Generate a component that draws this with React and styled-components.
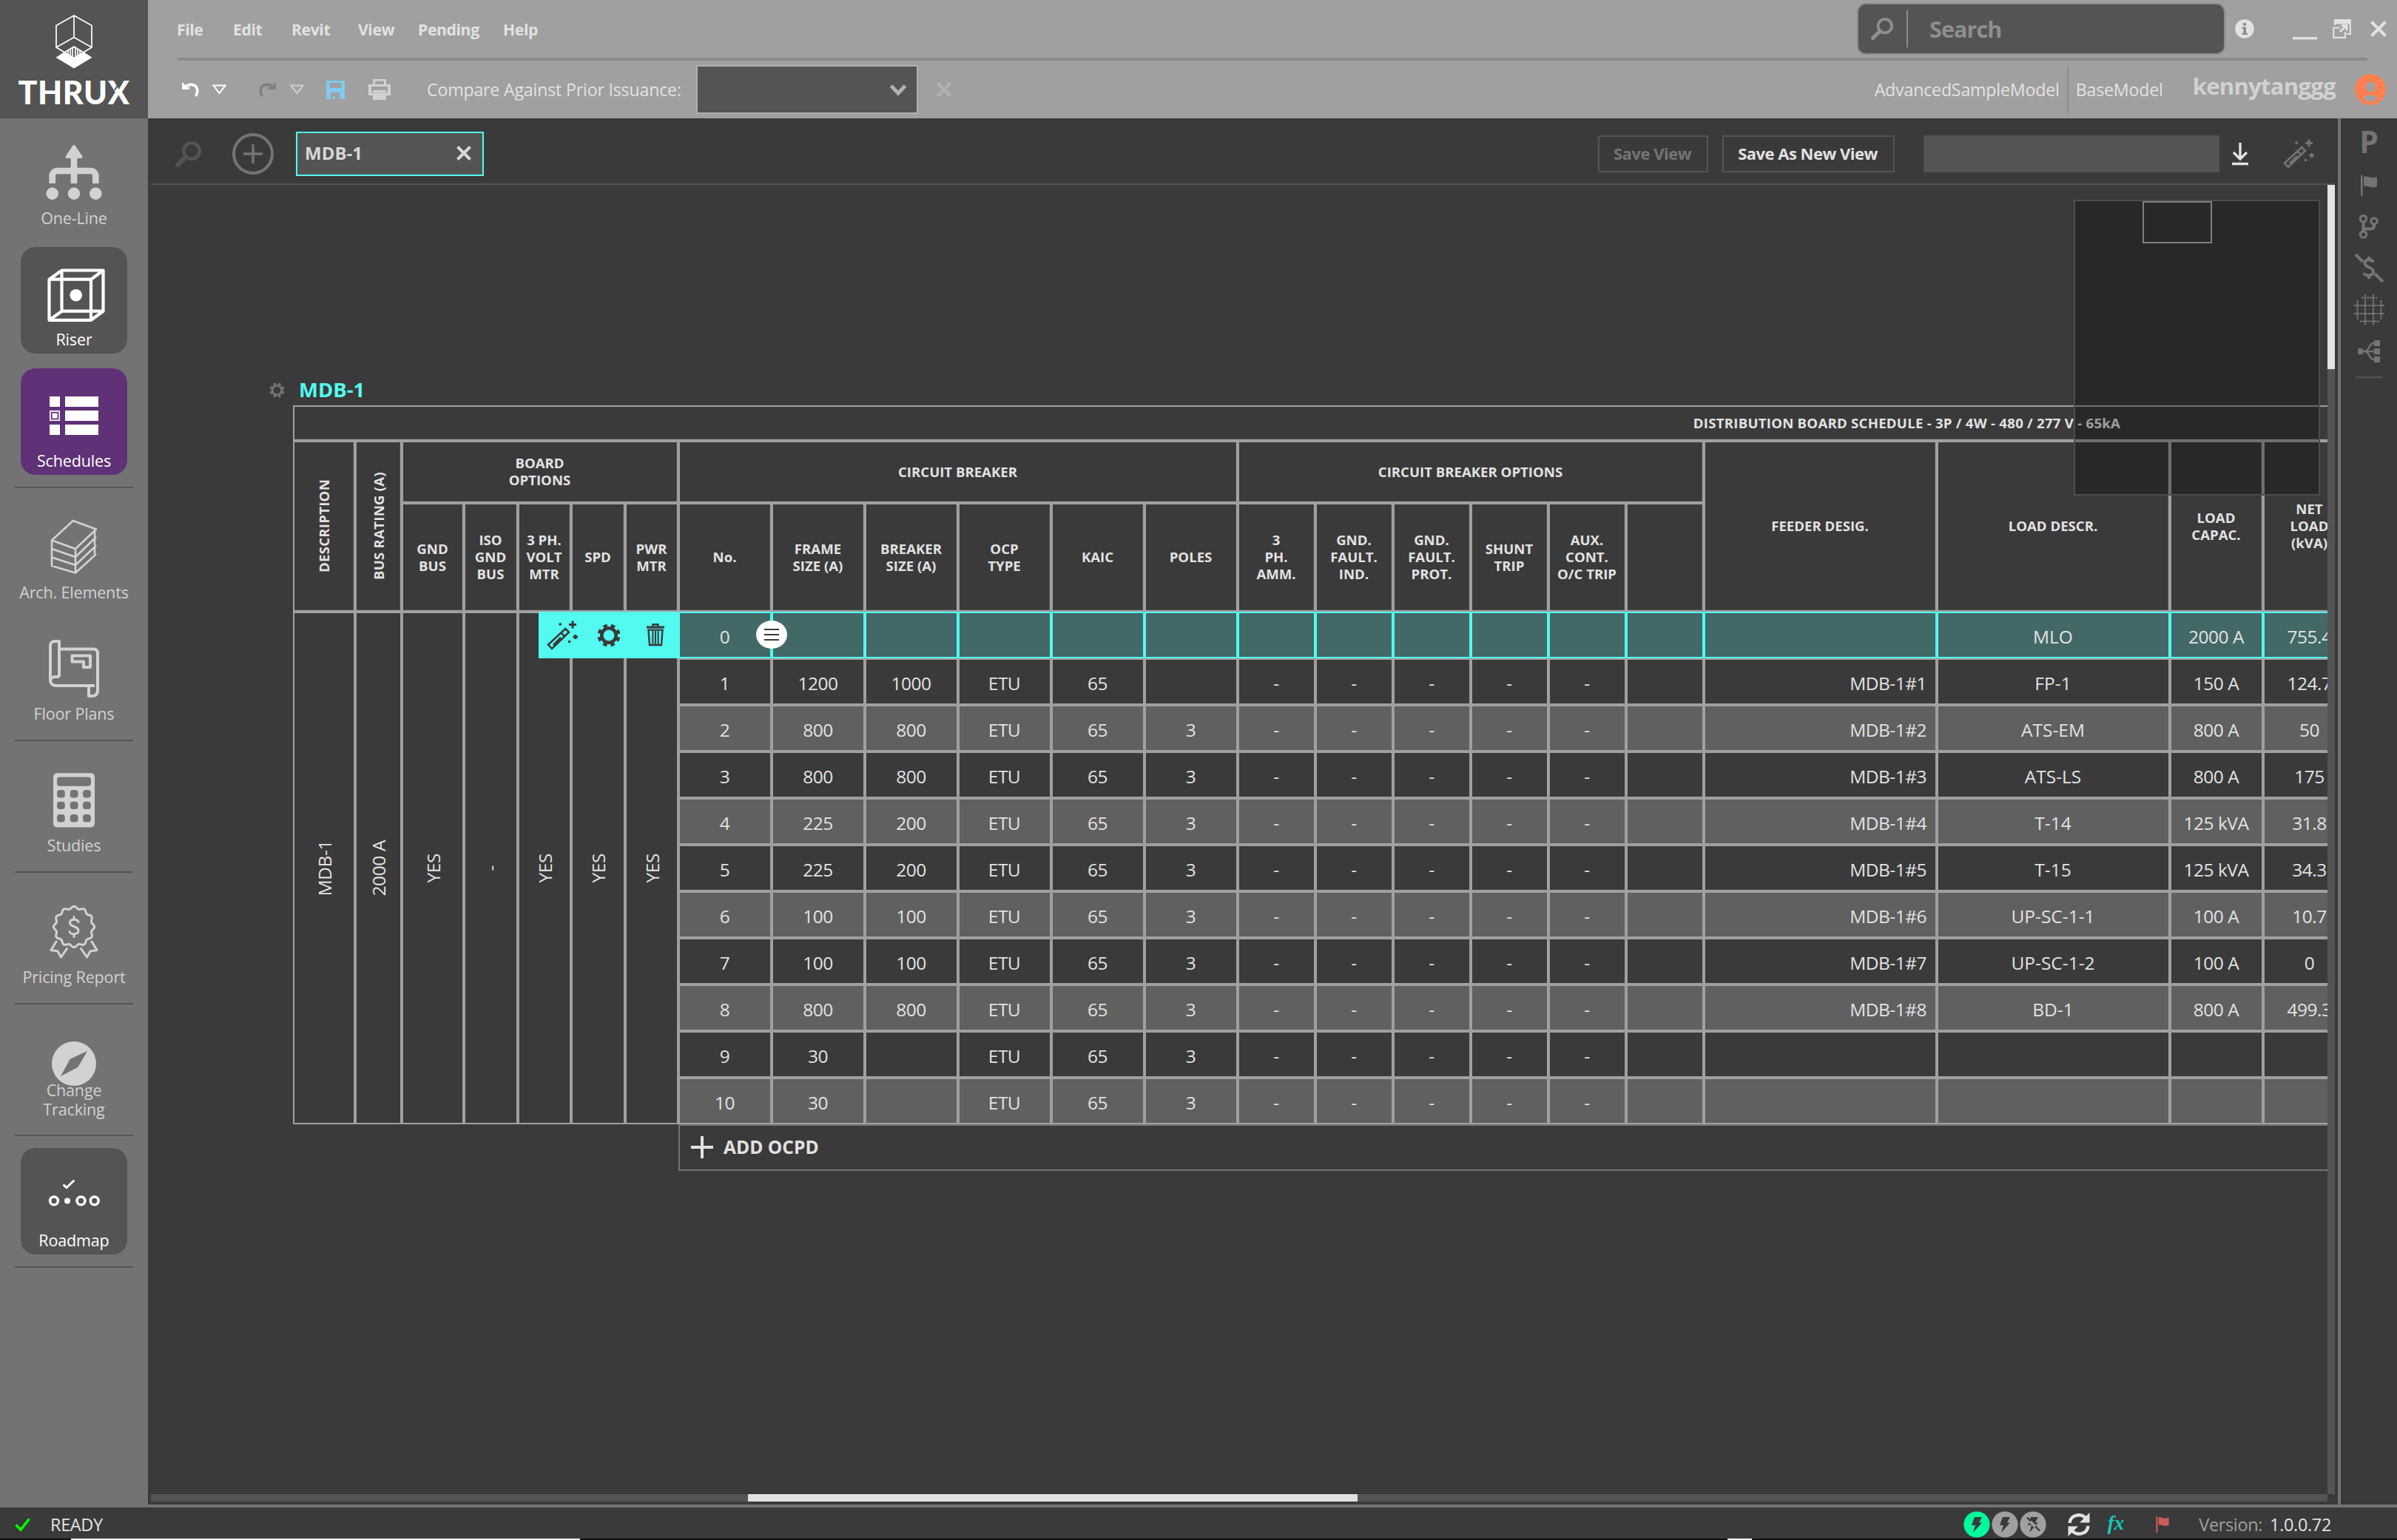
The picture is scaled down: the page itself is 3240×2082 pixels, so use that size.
import React from "react";
import styled, { createGlobalStyle } from "styled-components";

const GlobalStyle = createGlobalStyle`
  * {
    box-sizing: border-box;
  }
  body {
    margin: 0;
    background: #3a3a3a;
    font-family: "Open Sans", "Noto Sans", sans-serif;
    color: #e2e2e2;
  }
  svg {
    display: block;
    flex: none;
    overflow: visible;
  }
`;

const Page = styled.div`
  display: flex;
  flex-direction: column;
  width: 3240px;
  height: 2082px;
  overflow: hidden;
  background: #3a3a3a;
`;

/* ---------- top ---------- */

const Top = styled.header`
  display: flex;
  flex: none;
  height: 160px;
`;

const LogoBox = styled.div`
  display: flex;
  flex-direction: column;
  align-items: center;
  width: 200px;
  padding-top: 19px;
  background: #545454;
`;

const LogoText = styled.div`
  position: relative;
  margin-top: 9px;
  font-family: "Lato", "Open Sans", sans-serif;
  font-weight: 900;
  font-size: 43px;
  line-height: 44px;
  letter-spacing: 0.6px;
  color: #fff;
`;

const LogoCut = styled.i`
  position: absolute;
  right: 16px;
  top: 5px;
  width: 2px;
  height: 15px;
  background: #545454;
  transform: rotate(33deg);
`;

const Bars = styled.div`
  flex: 1;
  background: #a0a0a0;
`;

const Bar = styled.div`
  display: flex;
  align-items: center;
  height: 78px;
  padding-left: ${(p) => p.$pl}px;
`;

const Rule = styled.div`
  width: 2960px;
  height: 4px;
  margin-left: 40px;
  background: #8b8b8b;
`;

const Push = styled.div`
  flex: 1;
`;

const Slot = styled.div`
  display: flex;
  flex: none;
  width: ${(p) => p.$w}px;
  padding-left: ${(p) => p.$pl || 0}px;
  color: #747474;
`;

const MenuItem = styled.a`
  flex: none;
  width: ${(p) => p.$w}px;
  font-size: 21.2px;
  font-weight: 700;
  letter-spacing: -0.4px;
  color: #e2e2e2;
`;

const BarText = styled.span`
  flex: none;
  font-size: 23.2px;
  letter-spacing: -0.2px;
  color: #e2e2e2;
  white-space: nowrap;
`;

const Combo = styled.div`
  display: flex;
  align-items: center;
  justify-content: flex-end;
  width: 300px;
  height: 66px;
  margin-left: 20px;
  padding-right: 14px;
  border: 2px solid #aeaeae;
  background: #545454;
`;

const SearchBox = styled.div`
  display: flex;
  align-items: center;
  width: 498px;
  height: 70px;
  padding-left: 17px;
  border: 2px solid #8b8b8b;
  border-radius: 12px;
  background: #545454;
  color: #8e8e8e;
  font-size: 30.5px;
  font-weight: 700;
  letter-spacing: -0.9px;
`;

const VLine = styled.div`
  flex: none;
  width: 2px;
  height: ${(p) => p.$h}px;
  margin: 0 ${(p) => p.$mr}px 0 ${(p) => p.$ml}px;
  background: #8b8b8b;
`;

const UserName = styled.span`
  margin: 0 26px 10px 40px;
  font-size: 31px;
  font-weight: 700;
  letter-spacing: -0.7px;
  color: #d2d2d2;
`;

/* ---------- sidebar ---------- */

const Middle = styled.div`
  display: flex;
  flex: none;
  height: 1878px;
`;

const Side = styled.nav`
  display: flex;
  flex-direction: column;
  align-items: center;
  flex: none;
  width: 200px;
  padding-top: 10px;
  background: #737373;
`;

const SideGroup = styled.div`
  display: flex;
  flex-direction: column;
  align-items: center;
  gap: 20px;
  width: 160px;
  margin-bottom: 16px;
  padding-bottom: 16px;
  border-bottom: 2px solid #545454;
`;

const tones = { none: "transparent", dark: "#545454", purple: "#5f3177" };

const SideItem = styled.div`
  width: 144px;
  height: 144px;
  border-radius: 20px;
  background: ${(p) => tones[p.$tone]};
  color: ${(p) => (p.$tone === "none" ? "#d2d2d2" : "#fff")};
`;

const SideLabel = styled.div`
  margin: ${(p) => (p.$lines === 2 ? -17 : 8)}px -10px 0;
  font-size: 21.5px;
  line-height: 26px;
  letter-spacing: -0.15px;
  text-align: center;
  white-space: pre-line;
`;

/* ---------- workspace ---------- */

const Main = styled.main`
  display: flex;
  flex: 1;
  border-bottom: 4px solid #737373;
`;

const Workspace = styled.div`
  display: flex;
  flex-direction: column;
  width: 2960px;
  padding-left: 4px;
`;

const Tools = styled.div`
  display: flex;
  align-items: center;
  width: 2951px;
  height: 90px;
  padding: 8px 29px 0 33px;
  border-bottom: 2px solid #545454;
`;

const Tab = styled.div`
  display: flex;
  align-items: center;
  justify-content: space-between;
  width: 254px;
  height: 60px;
  margin-left: 30px;
  padding: 0 15px 3px 10px;
  border: 2px solid #53faef;
  background: #545454;
  font-size: 24px;
  font-weight: 700;
  color: #d8d8d8;
`;

const ToolButton = styled.button`
  width: ${(p) => p.$w}px;
  height: 50px;
  margin-right: ${(p) => p.$mr}px;
  padding: 0 2px 2px 0;
  border: 2px solid #545454;
  background: none;
  font: 700 22px "Open Sans", sans-serif;
  letter-spacing: -0.5px;
  color: ${(p) => (p.$off ? "#747474" : "#e2e2e2")};
`;

const ViewInput = styled.div`
  width: 400px;
  height: 50px;
  background: #545454;
`;

const CanvasRow = styled.div`
  display: flex;
  height: 1770px;
`;

const Canvas = styled.section`
  position: relative;
  width: 2942px;
  overflow: hidden;
`;

const VTrack = styled.div`
  width: 10px;
  background: #545454;
`;

const VThumb = styled.div`
  height: 249px;
  background: #e2e2e2;
`;

const HTrack = styled.div`
  width: 2942px;
  height: 10px;
  padding-left: 807px;
  background: #545454;
`;

const HThumb = styled.div`
  width: 824px;
  height: 10px;
  background: #e2e2e2;
`;

const Minimap = styled.div`
  position: absolute;
  left: 2599px;
  top: 20px;
  width: 333px;
  height: 400px;
  padding-left: 91px;
  border: 2px solid #4d4d4d;
  background: rgba(0, 0, 0, 0.3);
`;

const MiniView = styled.div`
  width: 94px;
  height: 57px;
  border: 2px solid #808080;
`;

const BoardTitle = styled.h2`
  display: flex;
  align-items: center;
  gap: 19px;
  height: 44px;
  margin: 254px 0 0 160px;
  font-size: 27.5px;
  font-weight: 700;
  color: #53faef;
`;

const TitleGear = styled.span`
  padding-top: 2px;
  color: #747474;
`;

const Board = styled.div`
  position: relative;
  display: grid;
  grid-template-columns: 84px 63px 84px 73px 72px 73px 72px repeat(6, 126px) repeat(6, 105px) 315px 315px 126px 126px 1575px;
  grid-template-rows: 48px 84px 147px repeat(12, 63px);
  width: 4364px;
  margin-left: 192px;
`;

const Cell = styled.div`
  display: flex;
  align-items: center;
  justify-content: center;
  border: 2px solid #a0a0a0;
  text-align: center;
  white-space: pre-line;
`;

const HeadCell = styled(Cell)`
  grid-area: ${(p) => p.$area};
  padding: 0 1px 2px 0;
  font-size: 18.6px;
  font-weight: 700;
  line-height: 23px;
  letter-spacing: ${(p) => (p.$wide ? 0.25 : 0)}px;
  box-shadow: inset -1px -1px 0 #4c4c4c;
`;

const Upright = styled.span`
  writing-mode: vertical-rl;
  transform: rotate(180deg);
`;

const SpanCell = styled(Cell)`
  grid-row: 4 / 15;
  font-size: 24.5px;
  letter-spacing: -0.4px;
`;

const DataCell = styled(Cell)`
  padding: 3px ${(p) => (p.$right ? 12 : 1)}px 0 0;
  justify-content: ${(p) => (p.$right ? "flex-end" : "center")};
  border-color: ${(p) => (p.$row === 0 ? "#53faef" : "#a0a0a0")};
  background: ${(p) => (p.$row === 0 ? "#426968" : p.$row % 2 ? "#3a3a3a" : "#606060")};
  font-size: 24.5px;
  letter-spacing: ${(p) => (p.$name ? 0 : -0.5)}px;
`;

const AddRow = styled.div`
  grid-area: 15 / 8 / 16 / -1;
  display: flex;
  align-items: center;
  gap: 14px;
  padding: 0 0 2px 15px;
  border: 2px solid #747474;
  font-size: 24.6px;
  font-weight: 700;
`;

const RowActions = styled.div`
  position: absolute;
  left: 332px;
  top: 279px;
  display: grid;
  grid-template-columns: repeat(3, 63px);
  place-items: center;
  width: 191px;
  height: 63px;
  background: #53faef;
  color: #3a3a3a;
`;

const RowHandle = styled.div`
  position: absolute;
  left: 626px;
  top: 291px;
  display: flex;
  flex-direction: column;
  align-items: center;
  justify-content: center;
  gap: 5px;
  width: 42px;
  height: 38px;
  border-radius: 50%;
  background: #fff;

  i {
    width: 20px;
    height: 2px;
    background: #3a3a3a;
  }
`;

const Rail = styled.aside`
  display: flex;
  flex-direction: column;
  align-items: center;
  width: 80px;
  border-left: 4px solid #737373;
  color: #747474;
`;

const RailLetter = styled.div`
  height: 77px;
  padding-top: 8px;
  font-size: 41px;
  line-height: 46px;
  font-weight: 700;
`;

const RailItem = styled.div`
  display: flex;
  align-items: flex-start;
  height: ${(p) => p.$h}px;
`;

const RailRule = styled.div`
  width: 36px;
  height: 2px;
  background: #545454;
`;

/* ---------- status ---------- */

const Status = styled.footer`
  display: flex;
  align-items: center;
  flex: none;
  height: 42px;
  padding: 4px 89px 0 20px;
  font-size: 23.5px;
  letter-spacing: -0.35px;
`;

const Dim = styled.span`
  margin-right: 10px;
  color: #a0a0a0;
`;

const Pills = styled.div`
  display: flex;
  gap: 2px;
  margin-right: 29px;
`;

const Fx = styled.span`
  margin: 0 43px 4px 24px;
  font-family: "Liberation Serif", serif;
  font-style: italic;
  font-weight: 700;
  font-size: 27px;
  letter-spacing: 0;
  color: #12c9ba;
`;

const Desktop = styled.div`
  display: flex;
  flex: none;
  height: 2px;
  background: #0c0c0c;
`;

const Sliver = styled.div`
  width: ${(p) => p.$w}px;
  margin-left: ${(p) => p.$ml}px;
  background: #f2f2f2;
`;

/* ---------- icons ---------- */

const Svg = ({ w, h, children, color = "currentColor", sw = 0 }) => (
  <svg width={w} height={h} viewBox={`0 0 ${w} ${h}`} fill={sw ? "none" : color} stroke={sw ? color : "none"} strokeWidth={sw}>
    {children}
  </svg>
);

const LogoMark = () => (
  <Svg w={50} h={75} color="#fff" sw={1.7}>
    <path d="M25 2 L49 15.5 V45 L25 59.5 L1 45 V15.5 Z M25 2 V31.5 M25 31.5 L1 45 M25 31.5 L49 45" />
    <path d="M11.5 51.5 L25 60 L38.5 51.5 L49.5 58.7 L25 73.5 L0.5 58.7 Z" fill="#fff" stroke="none" />
    <path d="M12 52 L25 44 L38 52 M17 49.5 V55 M20 48 V56.5 M23 46 V58 M27 46 V58 M30 48 V56.5 M33 49.5 V55" />
  </Svg>
);

const Undo = ({ color, flip }) => (
  <svg width="24" height="24" viewBox="0 0 24 24" transform={flip ? "scale(-1 1)" : undefined}>
    <path d="M4 9.5 C10 3 22 4 21.8 14.5 Q21.6 18 19.6 21" fill="none" stroke={color} strokeWidth="3.6" />
    <path d="M1 2 L4.5 5 L6 9 L12 8.5 L10.5 12 H1 Z" fill={color} />
  </svg>
);

const Caret = ({ color }) => (
  <Svg w={21} h={14} color={color} sw={2}>
    <path d="M2.5 1.5 H18.5 L10.5 12 Z" />
  </Svg>
);

const Floppy = () => (
  <Svg w={25} h={25} color="#7fcbee">
    <path fillRule="evenodd" d="M0 0 H25 V25 H0 Z M4.5 3 V10 H20.5 V3 Z M6 16 V25 H9 V21 H12 V25 H18 V16 Z" />
  </Svg>
);

const Printer = () => (
  <Svg w={30} h={30} color="#d2d2d2">
    <path fillRule="evenodd" d="M6 1 H24 V8 H6 Z M9 3.5 V8 H21 V3.5 Z" />
    <path fillRule="evenodd" d="M0 8 H30 V23 H24 V29 H6 V23 H0 Z M4 11 V19.5 H26 V11 Z" />
    <rect x="6" y="16" width="18" height="3" />
  </Svg>
);

const Cross = ({ s, color, sw = 4 }) => (
  <Svg w={s} h={s} color={color} sw={sw}>
    <path d={`M1.5 1.5 L${s - 1.5} ${s - 1.5} M${s - 1.5} 1.5 L1.5 ${s - 1.5}`} />
  </Svg>
);

const Chevron = () => (
  <Svg w={22} h={17} color="#b0b0b0" sw={5}>
    <path d="M1.5 3 L11 13 L20.5 3" />
  </Svg>
);

const Magnifier = ({ s = 35, color, sw = 4.6 }) => (
  <svg width={s} height={s} viewBox="0 0 35 35" fill="none" stroke={color} strokeWidth={sw} strokeLinecap="round">
    <circle cx="22" cy="13" r="10.8" />
    <path d="M14 21.5 L3 32" strokeWidth="6" />
  </svg>
);

const Info = () => (
  <Svg w={26} h={26} color="#e2e2e2">
    <circle cx="13" cy="13" r="12.8" />
    <path d="M11 5 H15 V8.6 H11 Z M9.5 10.5 H15 V18.5 H17 V21 H9.5 V18.5 H11.4 V13 H9.5 Z" fill="#8e8e8e" />
  </Svg>
);

const Minimize = () => (
  <Svg w={33} h={26} color="#e2e2e2">
    <rect y="24" width="33" height="3.4" />
  </Svg>
);

const Restore = () => (
  <Svg w={25} h={26} color="#e2e2e2" sw={2.2}>
    <path d="M3 8 V1.2 H23.8 V20 H19" />
    <path d="M2 4 H24" strokeWidth="5" />
    <path d="M10 11.5 H1.2 V24.8 H17 V17" />
    <path d="M10 17 L18 9 M12 8.5 H19 V15.5" strokeWidth="3" />
  </Svg>
);

const Avatar = () => (
  <Svg w={42} h={42} color="#ff7f4f">
    <circle cx="21" cy="21" r="21" />
    <circle cx="21" cy="17.5" r="6.8" fill="#a0a0a0" />
    <path d="M11.5 33 C13 27 29 27 30.5 33 C26 38.5 16 38.5 11.5 33 Z" fill="#a0a0a0" />
  </Svg>
);

const PlusRing = () => (
  <Svg w={56} h={56} color="#747474" sw={4}>
    <circle cx="28" cy="28" r="26" />
    <path d="M15 28 H41 M28 15 V41" strokeWidth="3.4" />
  </Svg>
);

const Download = () => (
  <Svg w={22} h={31} color="#e2e2e2" sw={3.4}>
    <path d="M11 0 V21 M2 13 L11 22 L20 13 M0 28.5 H22" />
  </Svg>
);

const Wand = () => (
  <Svg w={42} h={40} color="currentColor" sw={2.6}>
    <path d="M25.3 11 L30 15.8 L7 38 L2 32.5 Z M19.5 16.5 L24.5 21.5 M9 33 L19 23" />
    <path d="M35 0.5 V10.5 M30 5.5 H40" strokeWidth="3" />
    <path d="M38.7 19 V25 M35.5 22 H42 M16.5 5 H20 M29 28.5 H32.2" strokeWidth="3" />
  </Svg>
);

const Gear = ({ s }) => (
  <svg width={s} height={s} viewBox="0 0 32 32" fill="none" stroke="currentColor">
    <circle cx="16" cy="16" r="9.7" strokeWidth="4.6" />
    <circle cx="16" cy="16" r="13.2" strokeWidth="4.6" strokeDasharray="5.4 4.97" strokeDashoffset="-2.4" />
  </svg>
);

const Trash = () => (
  <Svg w={24} h={31} sw={2.4}>
    <path d="M0 5 H24" strokeWidth="3" />
    <path d="M8.5 4 V1.2 H15.5 V4 M2.5 8.6 H21.5 L20 29 H4 Z" />
    <path d="M8.4 10 V28 M12 10 V28 M15.6 10 V28" strokeWidth="2" />
  </Svg>
);

const Plus = () => (
  <Svg w={30} h={30} color="#e2e2e2" sw={4}>
    <path d="M0 15 H30 M15 0 V30" />
  </Svg>
);

const Flag = ({ w, h, color = "currentColor" }) => (
  <svg width={w} height={h} viewBox="0 0 22 28" fill={color}>
    <path d="M0 0 H2.6 V28 H0 Z M4 2 C10 0 13 6 22 2 V15 C14 19 10 13 4 15 Z" />
  </svg>
);

const Branch = () => (
  <Svg w={28} h={34} sw={3.2}>
    <circle cx="6.5" cy="6.7" r="4.2" />
    <circle cx="21" cy="10" r="4.2" />
    <circle cx="6.5" cy="28" r="4.2" />
    <path d="M6.5 11 V24 M21 14 V16 Q21 20.5 16 20.5 H7" strokeWidth="4" />
  </Svg>
);

const NoDollar = () => (
  <Svg w={40} h={40} sw={4}>
    <path d="M26 12.5 C24 8 14.5 8 14.5 14 C14.5 20.5 26 18 26 25.5 C26 31.5 15 31.5 13 27" />
    <path d="M20 5 V10 M20 29 V35 M2 2 L12 12 M28 28 L39 39" />
  </Svg>
);

const Globe = () => (
  <Svg w={41} h={41} sw={2.2}>
    <path
      d="M0 15 H41 M0 26 H41 M15 0 V41 M26 0 V41 M10 4.5 H31 M8 36.5 H34 M4.5 8 V34 M36.5 8 V34"
      strokeDasharray="3 0.8"
    />
  </Svg>
);

const Tree = () => (
  <Svg w={30} h={30}>
    <path d="M0 11 H7 V19 H0 Z M22 0 H30 V8 H22 Z M22 11 H30 V19 H22 Z M22 22 H30 V30 H22 Z" />
    <path d="M7 15 H22 M22 4 C14 4 17 15 8 15 C17 15 14 26 22 26" fill="none" stroke="currentColor" strokeWidth="2.4" />
  </Svg>
);

const Check = () => (
  <Svg w={21} h={19} color="#00ff00" sw={3.6}>
    <path d="M1.5 9.5 L8 16 L19.5 1.5" />
  </Svg>
);

const Bolt = ({ color, cut }) => (
  <Svg w={36} h={36} color={color}>
    <circle cx="18" cy="18" r="17.6" />
    <path d="M15 8 H25 L21 15.5 H25 L13 29 L16 19 H11 Z" fill="#3a3a3a" />
    {cut && <path d="M9 9 L27 27" stroke={color} strokeWidth="4" />}
    {cut && <path d="M10 8.5 L15 13.5 M21 20.5 L27 26.5" stroke="#3a3a3a" strokeWidth="2.4" />}
  </Svg>
);

const Sync = () => (
  <Svg w={30} h={32} color="#e2e2e2" sw={4.4}>
    <path d="M2.5 14 C4 1.5 19 0.5 25 8.5 M27.5 18 C26 30.5 11 31.5 5 23.5" />
    <path d="M29.5 0 V13.5 H16 Z M0.5 32 V18.5 H14 Z" fill="#e2e2e2" stroke="none" />
  </Svg>
);

/* sidebar icons share one 144x104 box above the label */
const OneLineIcon = () => (
  <>
    <path d="M42.7 78 V68 a7 7 0 0 1 7 -7 H94.3 a7 7 0 0 1 7 7 V78 M72 40 V78" fill="none" stroke="currentColor" strokeWidth="8.7" />
    <path d="M72 28 L62.5 42 H81.5 Z" stroke="currentColor" strokeWidth="4" strokeLinejoin="round" />
    <circle cx="42.7" cy="91.7" r="8.2" />
    <circle cx="72" cy="91.7" r="8.2" />
    <circle cx="101.3" cy="91.7" r="8.2" />
  </>
);

const RiserIcon = () => (
  <>
    <path
      d="M38.5 43.7 H95 V98.8 H38.5 Z M55.5 31.5 H111.5 V86.7 H55.5 Z M38.5 43.7 L55.5 31.5 M95 43.7 L111.5 31.5 M38.5 98.8 L55.5 86.7 M95 98.8 L111.5 86.7"
      fill="none"
      stroke="currentColor"
      strokeWidth="4.2"
      strokeLinejoin="round"
    />
    <circle cx="74.7" cy="65.2" r="8.3" />
  </>
);

const SchedulesIcon = () => (
  <>
    {[38, 57, 76].map((y) => (
      <React.Fragment key={y}>
        <rect x="39" y={y} width="14" height="14" />
        <rect x="60" y={y} width="45" height="14" />
      </React.Fragment>
    ))}
    <rect x="41.7" y="59.7" width="8.8" height="8.8" fill="none" stroke="#5f3177" strokeWidth="1.8" />
  </>
);

const ArchIcon = () => (
  <path
    d="M42 54.5 L70.7 28 L102 39.5 L74 66 Z M42 54.5 V89 L74 98.5 V66 M42 66 L74 77 L102 50 M42 77.5 L74 88 L102 61.5 M74 98.5 L102 73 M100 41 V50 M100 53 V61 M100 64 V73"
    fill="none"
    stroke="currentColor"
    strokeWidth="2.6"
    strokeLinejoin="round"
  />
);

const FloorIcon = () => (
  <path
    d="M52 75 V27 H46 a6 6 0 0 0 -6 6 V80 a7 7 0 0 0 7 7 H100 M40 80 a6 6 0 0 1 6 -5 H52 M53 37.5 H99 a5 5 0 0 1 5 5 V94 a7 7 0 0 1 -8 7 H92 V87 M69.5 46.5 H94 V62 H85 V54.5 H69.5 Z"
    fill="none"
    stroke="currentColor"
    strokeWidth="4"
    strokeLinejoin="round"
  />
);

const StudiesIcon = () => (
  <>
    <rect x="44" y="27.3" width="56" height="73.2" rx="5" />
    <g fill="#737373">
      <rect x="49" y="32.5" width="46" height="12.3" rx="4" />
      {[50, 65.7, 83].map((y) => [49, 66.7, 84].map((x) => <rect key={x + y} x={x} y={y} width="10.8" height="10.4" rx="4" />))}
    </g>
  </>
);

const badge = Array.from({ length: 145 }, (_, i) => {
  const a = (i / 144) * Math.PI * 2;
  const r = 26 + 1.6 * Math.cos(a * 12);
  return `${i ? "L" : "M"}${(72 + r * Math.sin(a)).toFixed(1)} ${(57 - r * Math.cos(a)).toFixed(1)}`;
}).join(" ");

const PricingIcon = () => (
  <g fill="none" stroke="currentColor" strokeWidth="3" strokeLinecap="round" strokeLinejoin="round">
    <path d={badge} />
    <path d="M48 77 L41 88.5 L50 90 L54.5 98 L62.5 86.5 M96 77 L103 88.5 L94 90 L89.5 98 L81.5 86.5" />
    <path d="M78 50.5 C76.5 46 66.5 46 66.5 51.5 C66.5 58 78 55.5 78 62 C78 68 67 68 66 63.5 M72 43.5 V47 M72 67 V70.5" />
  </g>
);

const ChangeIcon = () => (
  <>
    <circle cx="72" cy="64" r="30" />
    <path d="M90 47 L66.7 57.8 L54 81 L77.3 68.7 Z" fill="#737373" />
  </>
);

const RoadmapIcon = () => (
  <g fill="none" stroke="currentColor">
    <path d="M58.5 50.5 L62 53.5 L71.5 44.5" strokeWidth="3" strokeLinecap="round" />
    <circle cx="45" cy="71.4" r="5.4" strokeWidth="3.6" />
    <circle cx="63" cy="71.4" r="4" fill="currentColor" stroke="none" />
    <circle cx="81.5" cy="71.4" r="5.4" strokeWidth="3.6" />
    <circle cx="99.7" cy="71.4" r="5.4" strokeWidth="3.6" />
  </g>
);

const sideGroups = [
  [
    { label: "One-Line", icon: OneLineIcon },
    { label: "Riser", icon: RiserIcon, tone: "dark" },
    { label: "Schedules", icon: SchedulesIcon, tone: "purple" },
  ],
  [
    { label: "Arch. Elements", icon: ArchIcon },
    { label: "Floor Plans", icon: FloorIcon },
  ],
  [{ label: "Studies", icon: StudiesIcon }],
  [{ label: "Pricing Report", icon: PricingIcon }],
  [{ label: "Change\nTracking", icon: ChangeIcon, lines: 2 }],
  [{ label: "Roadmap", icon: RoadmapIcon, tone: "dark" }],
];

const menus = [
  ["File", 76],
  ["Edit", 79],
  ["Revit", 90],
  ["View", 81],
  ["Pending", 115],
  ["Help", 60],
];

// row-start / col-start / row-end / col-end
const heads = [
  ["DISTRIBUTION BOARD SCHEDULE - 3P / 4W - 480 / 277 V - 65kA", "1 / 1 / 2 / -1"],
  ["DESCRIPTION", "2 / 1 / 4 / 2", true],
  ["BUS RATING (A)", "2 / 2 / 4 / 3", true],
  ["BOARD\nOPTIONS", "2 / 3 / 3 / 8"],
  ["GND\nBUS", "3 / 3 / 4 / 4"],
  ["ISO\nGND\nBUS", "3 / 4 / 4 / 5"],
  ["3 PH.\nVOLT\nMTR", "3 / 5 / 4 / 6"],
  ["SPD", "3 / 6 / 4 / 7"],
  ["PWR\nMTR", "3 / 7 / 4 / 8"],
  ["CIRCUIT BREAKER", "2 / 8 / 3 / 14"],
  ["No.", "3 / 8 / 4 / 9"],
  ["FRAME\nSIZE (A)", "3 / 9 / 4 / 10"],
  ["BREAKER\nSIZE (A)", "3 / 10 / 4 / 11"],
  ["OCP\nTYPE", "3 / 11 / 4 / 12"],
  ["KAIC", "3 / 12 / 4 / 13"],
  ["POLES", "3 / 13 / 4 / 14"],
  ["CIRCUIT BREAKER OPTIONS", "2 / 14 / 3 / 20"],
  ["3\nPH.\nAMM.", "3 / 14 / 4 / 15"],
  ["GND.\nFAULT.\nIND.", "3 / 15 / 4 / 16"],
  ["GND.\nFAULT.\nPROT.", "3 / 16 / 4 / 17"],
  ["SHUNT\nTRIP", "3 / 17 / 4 / 18"],
  ["AUX.\nCONT.\nO/C TRIP", "3 / 18 / 4 / 19"],
  ["", "3 / 19 / 4 / 20"],
  ["FEEDER DESIG.", "2 / 20 / 4 / 21"],
  ["LOAD DESCR.", "2 / 21 / 4 / 22"],
  ["LOAD\nCAPAC.", "2 / 22 / 4 / 23"],
  ["NET\nLOAD\n(kVA)", "2 / 23 / 4 / 24"],
  ["", "2 / 24 / 4 / 25"],
];

const boardValues = ["MDB-1", "2000 A", "YES", "-", "YES", "YES", "YES"];

// frame, breaker, type, kaic, poles, feeder, load, capacity, net
const breakers = [
  ["", "", "", "", "", "", "MLO", "2000 A", "755.4"],
  ["1200", "1000", "ETU", "65", "", "MDB-1#1", "FP-1", "150 A", "124.7"],
  ["800", "800", "ETU", "65", "3", "MDB-1#2", "ATS-EM", "800 A", "50"],
  ["800", "800", "ETU", "65", "3", "MDB-1#3", "ATS-LS", "800 A", "175"],
  ["225", "200", "ETU", "65", "3", "MDB-1#4", "T-14", "125 kVA", "31.8"],
  ["225", "200", "ETU", "65", "3", "MDB-1#5", "T-15", "125 kVA", "34.3"],
  ["100", "100", "ETU", "65", "3", "MDB-1#6", "UP-SC-1-1", "100 A", "10.7"],
  ["100", "100", "ETU", "65", "3", "MDB-1#7", "UP-SC-1-2", "100 A", "0"],
  ["800", "800", "ETU", "65", "3", "MDB-1#8", "BD-1", "800 A", "499.3"],
  ["30", "", "ETU", "65", "3", "", "", "", ""],
  ["30", "", "ETU", "65", "3", "", "", "", ""],
];

const FEEDER_COL = 12;
const LOAD_COL = 13;

const toCells = (row, i) => {
  const dash = i === 0 ? "" : "-";
  return [String(i), ...row.slice(0, 5), dash, dash, dash, dash, dash, "", ...row.slice(5), ""];
};

const TopBars = () => (
  <Top>
    <LogoBox>
      <LogoMark />
      <LogoText>
        THRUX
        <LogoCut />
      </LogoText>
    </LogoBox>
    <Bars>
      <Bar $pl={39}>
        {menus.map(([label, w]) => (
          <MenuItem key={label} $w={w}>
            {label}
          </MenuItem>
        ))}
        <Push />
        <SearchBox>
          <Magnifier s={30} color="#8e8e8e" sw={4.4} />
          <VLine $h={50} $ml={18} $mr={29} />
          Search
        </SearchBox>
        <Slot $w={91} $pl={13}>
          <Info />
        </Slot>
        <Slot $w={54}>
          <Minimize />
        </Slot>
        <Slot $w={51}>
          <Restore />
        </Slot>
        <Slot $w={36}>
          <Cross s={22} color="#e2e2e2" />
        </Slot>
      </Bar>
      <Rule />
      <Bar $pl={45}>
        <Slot $w={41}>
          <Undo color="#fff" />
        </Slot>
        <Slot $w={64}>
          <Caret color="#fff" />
        </Slot>
        <Slot $w={41}>
          <Undo color="#808080" flip />
        </Slot>
        <Slot $w={50}>
          <Caret color="#d0d0d0" />
        </Slot>
        <Slot $w={57}>
          <Floppy />
        </Slot>
        <Slot $w={79}>
          <Printer />
        </Slot>
        <BarText>Compare Against Prior Issuance:</BarText>
        <Combo>
          <Chevron />
        </Combo>
        <Slot $w={46} $pl={25}>
          <Cross s={20} color="#b2b2b2" />
        </Slot>
        <Push />
        <BarText>AdvancedSampleModel</BarText>
        <VLine $h={62} $ml={10} $mr={10} />
        <BarText>BaseModel</BarText>
        <UserName>kennytanggg</UserName>
        <Slot $w={57}>
          <Avatar />
        </Slot>
      </Bar>
    </Bars>
  </Top>
);

const Sidebar = () => (
  <Side>
    {sideGroups.map((group, g) => (
      <SideGroup key={g}>
        {group.map(({ label, icon: Icon, tone = "none", lines }) => (
          <SideItem key={label} $tone={tone}>
            <Svg w={144} h={104}>
              <Icon />
            </Svg>
            <SideLabel $lines={lines}>{label}</SideLabel>
          </SideItem>
        ))}
      </SideGroup>
    ))}
  </Side>
);

const Toolbar = () => (
  <Tools>
    <Slot $w={77}>
      <Magnifier color="#545454" />
    </Slot>
    <PlusRing />
    <Tab>
      MDB-1
      <Cross s={20} color="#d8d8d8" />
    </Tab>
    <Push />
    <ToolButton $w={149} $mr={19} $off>
      Save View
    </ToolButton>
    <ToolButton $w={233} $mr={39}>
      Save As New View
    </ToolButton>
    <ViewInput />
    <Slot $w={86} $pl={17}>
      <Download />
    </Slot>
    <Slot $w={40}>
      <Wand />
    </Slot>
  </Tools>
);

const Schedule = () => (
  <Board>
    {heads.map(([text, area, vertical], i) => (
      <HeadCell key={area} $area={area} $wide={i === 0 || vertical}>
        {vertical ? <Upright>{text}</Upright> : text}
      </HeadCell>
    ))}
    {boardValues.map((v, i) => (
      <SpanCell key={i}>
        <Upright>{v}</Upright>
      </SpanCell>
    ))}
    {breakers.map((row, r) =>
      toCells(row, r).map((v, c) => (
        <DataCell key={`${r}-${c}`} $row={r} $right={c === FEEDER_COL} $name={c === LOAD_COL}>
          {v}
        </DataCell>
      ))
    )}
    <AddRow>
      <Plus />
      ADD OCPD
    </AddRow>
    <RowActions>
      <Wand />
      <Gear s={32} />
      <Trash />
    </RowActions>
    <RowHandle>
      <i />
      <i />
      <i />
    </RowHandle>
  </Board>
);

const RightRail = () => (
  <Rail>
    <RailLetter>P</RailLetter>
    <RailItem $h={52}>
      <Flag w={22} h={28} />
    </RailItem>
    <RailItem $h={53}>
      <Branch />
    </RailItem>
    <RailItem $h={56}>
      <NoDollar />
    </RailItem>
    <RailItem $h={62}>
      <Globe />
    </RailItem>
    <RailItem $h={49}>
      <Tree />
    </RailItem>
    <RailRule />
  </Rail>
);

const StatusBar = () => (
  <Status>
    <Slot $w={48}>
      <Check />
    </Slot>
    READY
    <Push />
    <Pills>
      <Bolt color="#00fa9a" />
      <Bolt color="#a0a0a0" />
      <Bolt color="#a0a0a0" cut />
    </Pills>
    <Sync />
    <Fx>fx</Fx>
    <Slot $w={58}>
      <Flag w={18} h={22} color="#cd5c5c" />
    </Slot>
    <Dim>Version:</Dim>
    1.0.0.72
  </Status>
);

const App = () => (
  <>
    <GlobalStyle />
    <Page>
      <TopBars />
      <Middle>
        <Sidebar />
        <Main>
          <Workspace>
            <Toolbar />
            <CanvasRow>
              <Canvas>
                <BoardTitle>
                  <TitleGear>
                    <Gear s={21} />
                  </TitleGear>
                  MDB-1
                </BoardTitle>
                <Schedule />
                <Minimap>
                  <MiniView />
                </Minimap>
              </Canvas>
              <VTrack>
                <VThumb />
              </VTrack>
            </CanvasRow>
            <HTrack>
              <HThumb />
            </HTrack>
          </Workspace>
          <RightRail />
        </Main>
      </Middle>
      <StatusBar />
      <Desktop>
        <Sliver $w={688} $ml={96} />
        <Sliver $w={33} $ml={1551} />
      </Desktop>
    </Page>
  </>
);

export default App;
